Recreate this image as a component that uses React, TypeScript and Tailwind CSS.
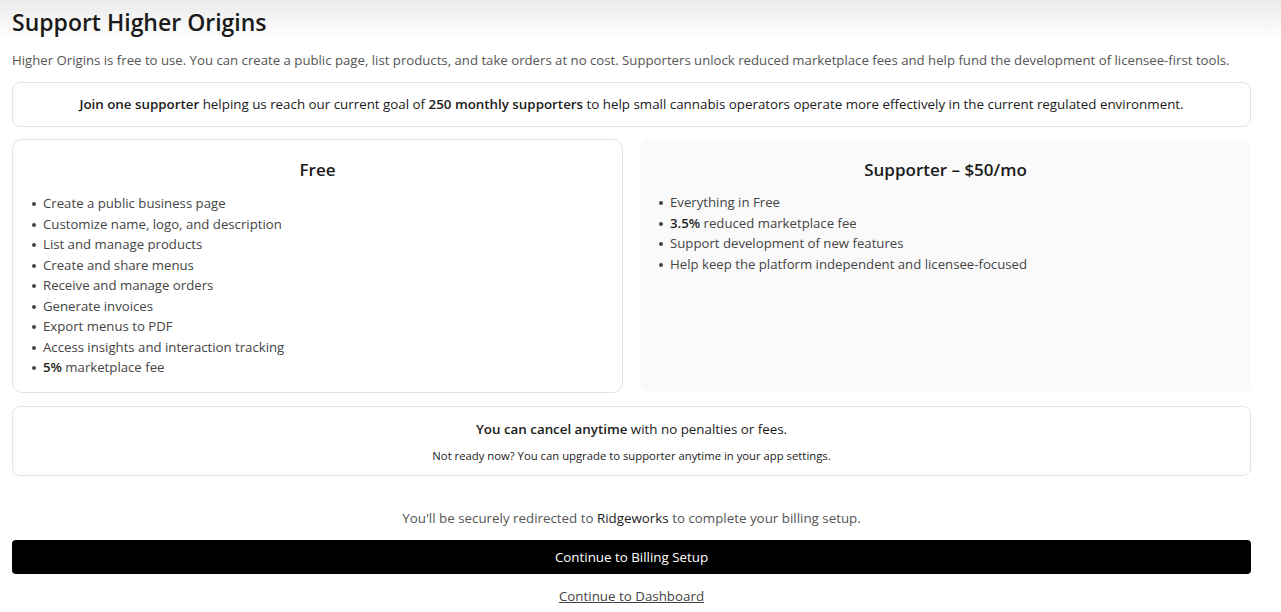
import React from "react";

const font = { fontFamily: '"Open Sans", "Noto Sans", sans-serif' };

function Item({ children }: { children: React.ReactNode }) {
  return (
    <li className="flex items-center h-[20.5px]">
      <span className="w-[4px] h-[4px] rounded-full bg-[#444] ml-[19px] mr-[7px]"></span>
      <span>{children}</span>
    </li>
  );
}

export default function App() {
  return (
    <div style={font} className="min-h-[612px] bg-white bg-gradient-to-b from-[#ebebeb] via-white via-[40px] to-white text-[#1a1a1a] pl-3 pr-[30px]">
      <h1 className="text-[23px] font-semibold leading-none pt-[11px] h-[45px]">Support Higher Origins</h1>
      <p className="text-[13.2px] text-[#555] leading-5 h-[26px] pt-[5px] whitespace-nowrap">
        Higher Origins is free to use. You can create a public page, list products, and take orders at no cost. Supporters unlock reduced marketplace fees and help fund the development of licensee-first tools.
      </p>

      <div className="mt-[11px] h-[45px] border border-[#e4e4e4] rounded-lg flex items-center justify-center text-[13.35px]">
        <p>
          <b className="font-semibold">Join one supporter</b> helping us reach our current goal of <b className="font-semibold">250 monthly supporters</b> to help small cannabis operators operate more effectively in the current regulated environment.
        </p>
      </div>

      <div className="mt-[12px] grid grid-cols-2 gap-[17px]">
        <div className="h-[254px] border border-[#e4e4e4] rounded-[10px] pt-[18px]">
          <h2 className="text-[17px] font-semibold text-center leading-6 mb-[12px]">Free</h2>
          <ul className="text-[13.2px] text-[#444]">
            <Item>Create a public business page</Item>
            <Item>Customize name, logo, and description</Item>
            <Item>List and manage products</Item>
            <Item>Create and share menus</Item>
            <Item>Receive and manage orders</Item>
            <Item>Generate invoices</Item>
            <Item>Export menus to PDF</Item>
            <Item>Access insights and interaction tracking</Item>
            <Item><b className="font-semibold text-[#222]">5%</b> marketplace fee</Item>
          </ul>
        </div>
        <div className="h-[254px] bg-[#fafafa] rounded-[10px] pt-[19px]">
          <h2 className="text-[17px] font-semibold text-center leading-6 mb-[11px]">Supporter – $50/mo</h2>
          <ul className="text-[13.2px] text-[#444]">
            <Item>Everything in Free</Item>
            <Item><b className="font-semibold text-[#222]">3.5%</b> reduced marketplace fee</Item>
            <Item>Support development of new features</Item>
            <Item>Help keep the platform independent and licensee-focused</Item>
          </ul>
        </div>
      </div>

      <div className="mt-[13px] h-[70px] border border-[#e4e4e4] rounded-lg flex flex-col items-center pt-[12px]">
        <p className="text-[13.35px] leading-5">
          <b className="font-semibold">You can cancel anytime</b> with no penalties or fees.
        </p>
        <p className="text-[11.3px] leading-4 mt-[9px]">Not ready now? You can upgrade to supporter anytime in your app settings.</p>
      </div>

      <p className="mt-[32px] text-center text-[13.35px] text-[#555] leading-5">
        You'll be securely redirected to <span className="text-[#1a1a1a]">Ridgeworks</span> to complete your billing setup.
      </p>
      <button className="mt-[12px] w-full h-[34px] bg-black text-white rounded-[4px] text-[13.35px]">Continue to Billing Setup</button>
      <div className="mt-[9px] text-center">
        <a className="text-[13.35px] text-[#444] underline leading-5">Continue to Dashboard</a>
      </div>
    </div>
  );
}
